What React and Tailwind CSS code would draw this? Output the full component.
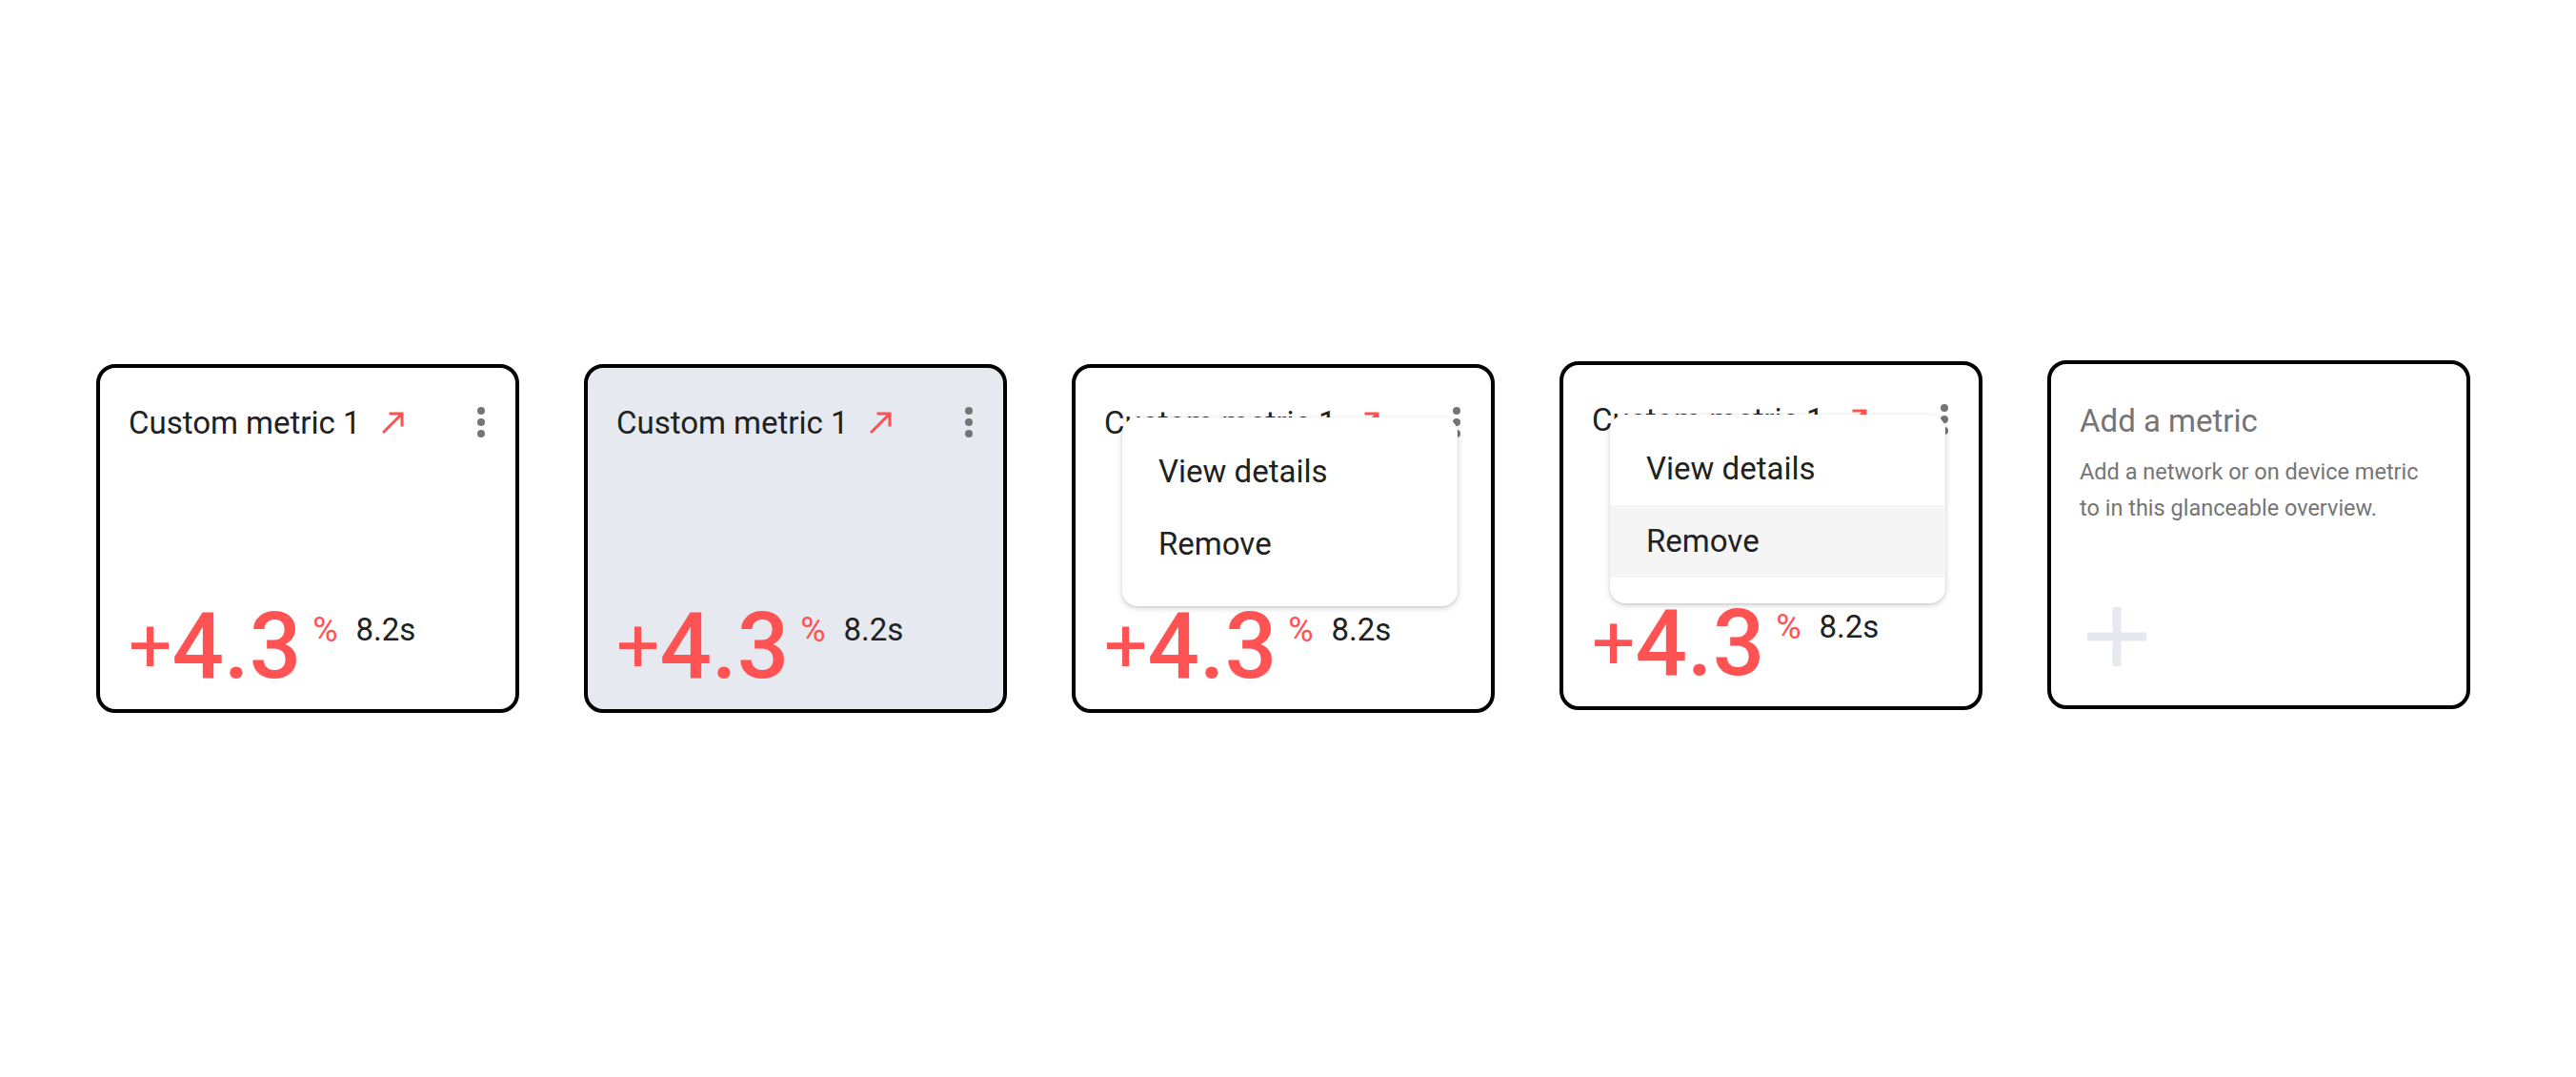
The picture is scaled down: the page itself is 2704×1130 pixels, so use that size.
import React from "react";

const RED = "#ff5252";

function ArrowNE() {
  return (
    <svg width="36" height="36" viewBox="0 0 24 24" fill={RED}>
      <path d="M9 5v2h6.59L4 18.59 5.41 20 17 8.41V15h2V5z" />
    </svg>
  );
}

function Dots() {
  return (
    <svg width="48" height="48" viewBox="0 0 24 24" fill="#757575">
      <circle cx="12" cy="6" r="2" />
      <circle cx="12" cy="12" r="2" />
      <circle cx="12" cy="18" r="2" />
    </svg>
  );
}

function Menu({ hover }) {
  return (
    <div className="absolute left-[49px] top-[52px] w-[352px] bg-white rounded-[16px] shadow-[0_2px_6px_rgba(0,0,0,0.18),0_1px_2px_rgba(0,0,0,0.08)] pt-[19px] pb-[27px] z-10">
      <div className="h-[76px] flex items-center pl-[38px] text-[33px] text-[#212121]">View details</div>
      <div className={"h-[76px] flex items-center pl-[38px] text-[33px] text-[#212121] " + (hover ? "bg-[#f5f5f5]" : "")}>Remove</div>
    </div>
  );
}

function MetricCard({ bg = "bg-white", menu = false, hover = false, mt = "mt-[4px]" }) {
  return (
    <div className={`relative w-[444px] h-[366px] shrink-0 border-[4px] border-black rounded-[20px] ${bg} ${mt} flex flex-col justify-between pt-[33px] pl-[30px] pr-[12px] pb-[18px]`}>
      <div className="flex items-center h-[48px]">
        <span className="text-[33px] leading-none text-[#212121]">Custom metric 1</span>
        <span className="ml-[16px] flex"><ArrowNE /></span>
        <span className="ml-auto flex"><Dots /></span>
      </div>
      <div className="flex items-start">
        <span className="text-[80px] leading-none text-[#ff5252] mt-[8px]">+</span>
        <span className="text-[96px] leading-none font-medium text-[#ff5252]">4.3</span>
        <span className="text-[36px] leading-none text-[#ff5252] ml-[12px] mt-[13px]">%</span>
        <span className="text-[33px] leading-none text-[#212121] ml-[19px] mt-[14px]">8.2s</span>
      </div>
      {menu && <Menu hover={hover} />}
    </div>
  );
}

function AddCard() {
  return (
    <div className="relative w-[444px] h-[366px] shrink-0 border-[4px] border-black rounded-[20px] bg-white flex flex-col justify-between pt-[40px] px-[30px] pb-[19px]">
      <div>
        <div className="text-[33px] leading-[40px] text-[#757575]">Add a metric</div>
        <div className="mt-[14px] text-[23.5px] leading-[38px] text-[#757575]">
          Add a network or on device metric to in this glanceable overview.
        </div>
      </div>
      <div className="-ml-[14px]">
        <svg width="106" height="106" viewBox="0 0 24 24" fill="#e5e8ee">
          <path d="M19 13h-6v6h-2v-6H5v-2h6V5h2v6h6v2z" />
        </svg>
      </div>
    </div>
  );
}

export default function App() {
  return (
    <div className="w-[2704px] h-[1130px] bg-white" style={{ fontFamily: "Roboto, 'Noto Sans', sans-serif" }}>
      <div className="flex items-start gap-[68px] pl-[101px] pt-[378px]">
        <MetricCard />
        <MetricCard bg="bg-[#e6e9ef]" />
        <MetricCard menu />
        <MetricCard menu hover mt="mt-[1px]" />
        <AddCard />
      </div>
    </div>
  );
}
